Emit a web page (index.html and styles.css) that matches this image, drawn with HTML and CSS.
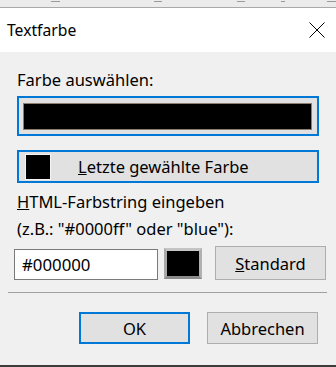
FILE: index.html
```html
<!DOCTYPE html>
<html lang="de">
<head>
  <meta charset="UTF-8" />
  <title>Textfarbe</title>
  <link rel="stylesheet" href="styles.css">
</head>
<body>
  <div class="behind-top">
    <span class="dash d1"></span>
    <span class="dash d2"></span>
    <span class="dash d3"></span>
    <span class="dash d4"></span>
    <span class="dash d5"></span>
  </div>

  <div class="titlebar">
    <span class="title">Textfarbe</span>
    <button class="close" title="Schließen">
      <svg width="16" height="16" viewBox="0 0 16 16">
        <path d="M0.5 0.5 L15.5 15.5 M15.5 0.5 L0.5 15.5" stroke="#000" stroke-width="1" fill="none"/>
      </svg>
    </button>
  </div>

  <div class="content">
    <div class="label">Farbe auswählen:</div>
    <button class="color-bar"><span class="color-fill"></span></button>
    <button class="last-color">
      <span class="last-swatch"></span>
      <span class="last-text"><u>L</u>etzte gewählte Farbe</span>
    </button>

    <div class="hints">
      <div class="hint"><u>H</u>TML-Farbstring eingeben</div>
      <div class="hint">(z.B.: "#0000ff" oder "blue"):</div>
    </div>

    <div class="html-row">
      <input type="text" class="html-input" value="#000000" />
      <span class="preview"></span>
      <button class="btn standard"><u>S</u>tandard</button>
    </div>

    <div class="separator"></div>

    <div class="actions">
      <button class="btn ok">OK</button>
      <button class="btn">Abbrechen</button>
    </div>
  </div>

  <div class="behind-bottom"></div>
</body>
</html>
```

FILE: styles.css
```css
body {
  margin: 0;
  width: 336px;
  height: 367px;
  overflow: hidden;
  background: #f0f0f0;
  font-family: 'Noto Sans', 'Open Sans', sans-serif;
  font-size: 16.5px;
  color: #000;
}

button, input {
  font-family: inherit;
  font-size: inherit;
  color: inherit;
  margin: 0;
}

.behind-top {
  height: 7px;
  background: #ebebeb;
  border-bottom: 1px solid #a9a9a9;
  display: flex;
  align-items: flex-start;
}

.dash {
  height: 1px;
  margin-top: 1px;
  background: #9a9a9a;
}

.d1 { width: 10px; margin-left: 51px; }
.d2 { width: 10px; margin-left: 94px; }
.d3 { width: 9px; margin-left: 75px; }
.d4 { width: 5px; margin-left: 36px; }
.d5 { width: 10px; margin-left: 42px; }

.titlebar {
  height: 44px;
  background: #fff;
  display: flex;
  align-items: center;
  justify-content: space-between;
  padding: 0 10px 0 7px;
}

.title {
  font-size: 15.7px;
}

.close {
  background: none;
  border: none;
  padding: 0;
  width: 16px;
  height: 16px;
  margin-right: 1px;
}

.close svg {
  display: block;
}

.content {
  padding: 17px 17px 0;
}

.label {
  line-height: 22px;
}

.color-bar {
  display: block;
  width: 302px;
  height: 40px;
  margin-top: 5px;
  padding: 5px 5px 4px 4px;
  background: #e1e1e1;
  border: 2px solid #0078d7;
  box-sizing: border-box;
}

.color-fill {
  display: block;
  height: 100%;
  background: #000;
  border: 1px solid #8a7e72;
  box-sizing: border-box;
}

.last-color {
  display: flex;
  align-items: center;
  width: 302px;
  height: 33px;
  margin-top: 14px;
  padding: 0 0 0 7px;
  background: #e1e1e1;
  border: 2px solid #0078d7;
  box-sizing: border-box;
}

.last-swatch {
  width: 24px;
  height: 24px;
  background: #000;
  box-shadow: 0 0 0 1px #f4f4f4;
}

.last-text {
  margin-left: 28px;
}

.hints {
  margin-top: 5px;
}

.hint {
  line-height: 27px;
}

.html-row {
  display: flex;
  align-items: flex-start;
  margin: 4px -7px 0 -3px;
  height: 34px;
}

.html-input {
  width: 144px;
  height: 31px;
  margin-top: 3px;
  padding: 0 7px;
  border: 1px solid #7a7a7a;
  background: #fff;
  box-sizing: border-box;
  font-size: 16.8px;
  outline: none;
}

.preview {
  width: 38px;
  height: 31px;
  margin: 2px 0 0 6px;
  background: #000;
  border: 3px solid;
  border-color: #c4c4c4 #b0b0b0 #8c8c8c #a8a8a8;
  box-sizing: border-box;
}

.btn {
  width: 111px;
  height: 32px;
  padding: 0;
  background: #e1e1e1;
  border: 1px solid #adadad;
  box-sizing: border-box;
}

.standard {
  height: 34px;
  margin-left: 13px;
}

.separator {
  height: 1px;
  background: #a0a0a0;
  margin: 12px -8px 0 -9px;
}

.actions {
  display: flex;
  justify-content: flex-end;
  gap: 17px;
  margin: 19px 1px 0 0;
}

.ok {
  border: 2px solid #0078d7;
}

.behind-bottom {
  height: 3px;
  margin-top: 21px;
  background: #3c3c3c;
}
```
